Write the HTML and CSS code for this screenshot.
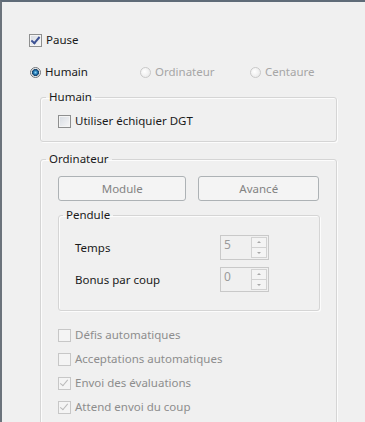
FILE: index.html
```html
<!DOCTYPE html>
<html lang="fr">
<head>
    <meta charset="UTF-8">
    <title>Options</title>
    <link rel="stylesheet" href="styles.css">
</head>
<body>
    <div class="dialog">
        <label class="check"><span class="box checked"></span>Pause</label>
        <div class="radios">
            <label class="radio"><span class="dot on"></span>Humain</label>
            <label class="radio disabled"><span class="dot"></span>Ordinateur</label>
            <label class="radio disabled"><span class="dot"></span>Centaure</label>
        </div>
        <fieldset class="group human">
            <legend>Humain</legend>
            <label class="check"><span class="box"></span>Utiliser échiquier DGT</label>
        </fieldset>
        <fieldset class="group computer">
            <legend>Ordinateur</legend>
            <div class="buttons">
                <button class="btn btn-module" disabled>Module</button>
                <button class="btn btn-advanced" disabled>Avancé</button>
            </div>
            <fieldset class="group clock">
                <legend>Pendule</legend>
                <div class="field">
                    <span class="field-label">Temps</span>
                    <div class="spin">
                        <span class="spin-value">5</span>
                        <span class="spin-buttons"><span class="up"></span><span class="down"></span></span>
                    </div>
                </div>
                <div class="field">
                    <span class="field-label">Bonus par coup</span>
                    <div class="spin">
                        <span class="spin-value">0</span>
                        <span class="spin-buttons"><span class="up"></span><span class="down"></span></span>
                    </div>
                </div>
            </fieldset>
            <div class="options">
                <label class="check disabled"><span class="box"></span>Défis automatiques</label>
                <label class="check disabled"><span class="box"></span>Acceptations automatiques</label>
                <label class="check disabled"><span class="box checked"></span>Envoi des évaluations</label>
                <label class="check disabled"><span class="box checked"></span>Attend envoi du coup</label>
            </div>
        </fieldset>
    </div>
</body>
</html>
```

FILE: styles.css
```css
:root {
    --bg: #f0f0f0;
    --text: #1a1a1a;
    --muted: #8d8d8d;
    --group-border: #d5d5d5;
}
html, body {
    margin: 0;
    height: 100%;
}
body {
    font-family: 'Noto Sans', 'Open Sans', sans-serif;
    font-size: 11.5px;
    color: var(--text);
    background-color: var(--bg);
    border-top: 2px solid #5f6b78;
    border-left: 2px solid #6b737c;
    box-sizing: border-box;
    overflow: hidden;
}
.dialog {
    padding: 30px 0 0 27px;
    width: 310px;
}
label {
    display: flex;
    align-items: center;
    height: 16px;
    line-height: 16px;
    white-space: nowrap;
}

/* checkbox */
.box {
    width: 11px;
    height: 11px;
    border: 1px solid #8e8f8f;
    background: linear-gradient(135deg, #d6dbe2, #f7f7f7);
    box-shadow: inset 0 0 0 1px #f4f4f4;
    margin-right: 4px;
    position: relative;
    flex: none;
}
.box.checked::after {
    content: "";
    position: absolute;
    left: 3px;
    top: 0px;
    width: 3px;
    height: 7px;
    border: solid #3d5294;
    border-width: 0 2px 2px 0;
    transform: rotate(40deg);
}
.check.disabled {
    color: var(--muted);
}
.check.disabled .box {
    border-color: #c7c7c7;
    background: #f4f4f4;
    box-shadow: none;
}
.check.disabled .box.checked::after {
    border-color: #b9b9b9;
    border-width: 0 1px 1px 0;
}

/* radios */
.radios {
    display: flex;
    margin: 16px 0 0 1px;
}
.radio {
    width: 110px;
    flex: none;
}
.dot {
    width: 11px;
    height: 11px;
    border-radius: 50%;
    border: 1px solid #c9c9c9;
    background: radial-gradient(circle at 40% 40%, #ffffff, #e4e4e4);
    margin-right: 4px;
    box-sizing: border-box;
    flex: none;
}
.dot.on {
    border-color: #6f7378;
    background: radial-gradient(circle, #8ad6f7 0, #1f72ad 2px, #163a5e 3.4px, #e0e0e0 3.7px, #f9f9f9 5px);
}
.radio.disabled {
    color: #a6a6a6;
}

/* group boxes */
.group {
    margin: 0;
    border: 1px solid var(--group-border);
    border-radius: 3px;
    box-shadow: inset 1px 1px 0 #fcfcfc, 1px 1px 0 #fcfcfc;
    min-width: 0;
}
.group legend {
    padding: 0 3px;
    margin-left: -12px;
    line-height: 16px;
}
.human {
    margin: 9px 0 0 11px;
    width: 297px;
    box-sizing: border-box;
    padding: 8px 17px 12px;
}
.computer {
    margin: 9px 0 0 11px;
    width: 297px;
    box-sizing: border-box;
    padding: 9px 17px 20px;
}

/* buttons */
.buttons {
    display: flex;
    gap: 12px;
}
.btn {
    height: 25px;
    border: 1px solid #adb2b5;
    border-radius: 3px;
    background-color: #f4f4f4;
    color: #838383;
    font: inherit;
    padding: 0;
}
.btn-module {
    width: 129px;
}
.btn-advanced {
    width: 121px;
}

/* clock */
.clock {
    margin: 6px 0 0;
    width: 262px;
    box-sizing: border-box;
    padding: 12px 16px 18px;
}
.field {
    display: flex;
    align-items: center;
    height: 25px;
}
.field + .field {
    margin-top: 7px;
}
.field-label {
    width: 145px;
}
.spin {
    display: flex;
    width: 49px;
    height: 25px;
    border: 1px solid #c9c9c9;
    box-sizing: border-box;
    background-color: #f0f0f0;
}
.spin-value {
    flex: 1;
    padding: 1px 0 0 3px;
    color: #9a9a9a;
    font-size: 12px;
    line-height: 16px;
}
.spin-buttons {
    width: 16px;
    display: flex;
    flex-direction: column;
    margin: 1px 1px 1px 0;
}
.spin-buttons span {
    flex: 1;
    border: 1px solid #d2d2d2;
    background-color: #f4f4f4;
    position: relative;
}
.spin-buttons span + span {
    border-top: none;
}
.spin-buttons span::after {
    content: "";
    position: absolute;
    left: 5px;
    top: 3px;
    border: 2px solid transparent;
}
.spin-buttons .up::after {
    border-bottom-color: #a8a8a8;
    top: 1px;
}
.spin-buttons .down::after {
    border-top-color: #a8a8a8;
    top: 4px;
}

/* options */
.options {
    margin-top: 16px;
    display: flex;
    flex-direction: column;
    gap: 8px;
}
```
